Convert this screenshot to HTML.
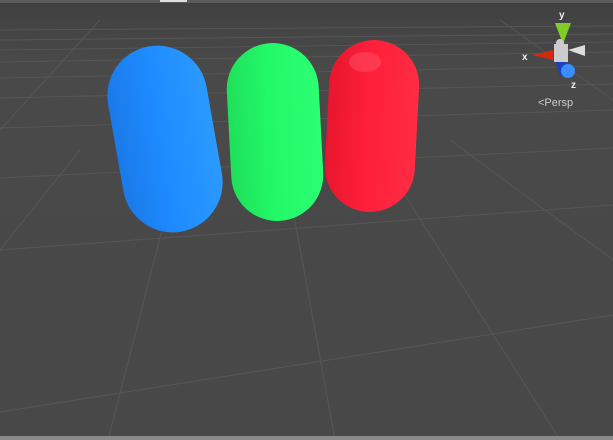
<!DOCTYPE html>
<html><head><style>
html,body{margin:0;padding:0;background:#474747;width:613px;height:440px;overflow:hidden;font-family:"Liberation Sans",sans-serif}
</style></head><body>
<svg width="613" height="440" viewBox="0 0 613 440" xmlns="http://www.w3.org/2000/svg">
<defs>
<linearGradient id="bg" x1="0" y1="0" x2="0" y2="1"><stop offset="0" stop-color="#404040"/><stop offset="0.15" stop-color="#494949"/><stop offset="1" stop-color="#484848"/></linearGradient>
<linearGradient id="gb" x1="0" y1="0" x2="1" y2="0"><stop offset="0" stop-color="#1a7ae8"/><stop offset="0.45" stop-color="#1e8bff"/><stop offset="1" stop-color="#2a9aff"/></linearGradient>
<linearGradient id="gg" x1="0" y1="0" x2="1" y2="0"><stop offset="0" stop-color="#1fe05a"/><stop offset="0.45" stop-color="#22f868"/><stop offset="1" stop-color="#2cff72"/></linearGradient>
<linearGradient id="gr" x1="0" y1="0" x2="1" y2="0"><stop offset="0" stop-color="#e8162e"/><stop offset="0.45" stop-color="#ff1f3a"/><stop offset="1" stop-color="#ff2c44"/></linearGradient>
</defs>
<rect width="613" height="440" fill="url(#bg)"/>
<rect x="0" y="0" width="613" height="3" fill="#5a5a5a"/>
<rect x="160" y="0" width="27" height="2" fill="#ddd"/>
<g stroke="#565656" stroke-width="1" fill="none">
<line x1="0" y1="30" x2="613" y2="26"/>
<line x1="0" y1="40" x2="613" y2="34"/>
<line x1="0" y1="50" x2="613" y2="42"/>
<line x1="0" y1="62" x2="613" y2="52"/>
<line x1="0" y1="78" x2="613" y2="66"/>
<line x1="0" y1="98" x2="613" y2="84"/>
<line x1="0" y1="128" x2="613" y2="110"/>
<line x1="0" y1="178" x2="613" y2="148"/>
<line x1="0" y1="250" x2="613" y2="205"/>
<line x1="0" y1="412" x2="613" y2="315"/>
<line x1="180" y1="160" x2="108" y2="440"/>
<line x1="283" y1="155" x2="335" y2="440"/>
<line x1="375" y1="148" x2="560" y2="440"/>
<line x1="80" y1="150" x2="0" y2="250"/>
<line x1="450" y1="140" x2="613" y2="260"/>
<line x1="100" y1="20" x2="0" y2="130"/>
<line x1="500" y1="20" x2="613" y2="100"/>
</g>
<rect x="0" y="436" width="613" height="4" fill="#8a8a8a"/>
<rect x="115" y="45" width="100" height="188" rx="50" fill="url(#gb)" transform="rotate(-10 165 139)"/>
<rect x="229" y="43" width="92" height="178" rx="46" fill="url(#gg)" transform="rotate(-3 275 132)"/>
<rect x="327" y="40" width="90" height="172" rx="45" fill="url(#gr)" transform="rotate(3 372 126)"/>
<ellipse cx="365" cy="62" rx="16" ry="10" fill="#ff6a7a" opacity="0.35"/>
<!-- gizmo -->
<polygon points="555,23 571,23 563,44" fill="#7fcc2a"/>
<rect x="554" y="44" width="14" height="18" fill="#ccc"/>
<circle cx="560" cy="43" r="4" fill="#ccc"/>
<polygon points="532,55 553,50 553,60" fill="#d02a12"/>
<polygon points="568,50 585,45 585,56" fill="#ddd"/>
<polygon points="556,62 566,62 572,76 560,76" fill="#1a3fc0"/>
<circle cx="568" cy="71" r="7" fill="#3a8cff"/>
<text x="559" y="18" font-size="10" font-weight="bold" fill="#eee">y</text>
<text x="522" y="60" font-size="10" font-weight="bold" fill="#eee">x</text>
<text x="571" y="88" font-size="10" font-weight="bold" fill="#eee">z</text>
<text x="538" y="106" font-size="11" fill="#ccc">&lt;Persp</text>
</svg>
</body></html>
